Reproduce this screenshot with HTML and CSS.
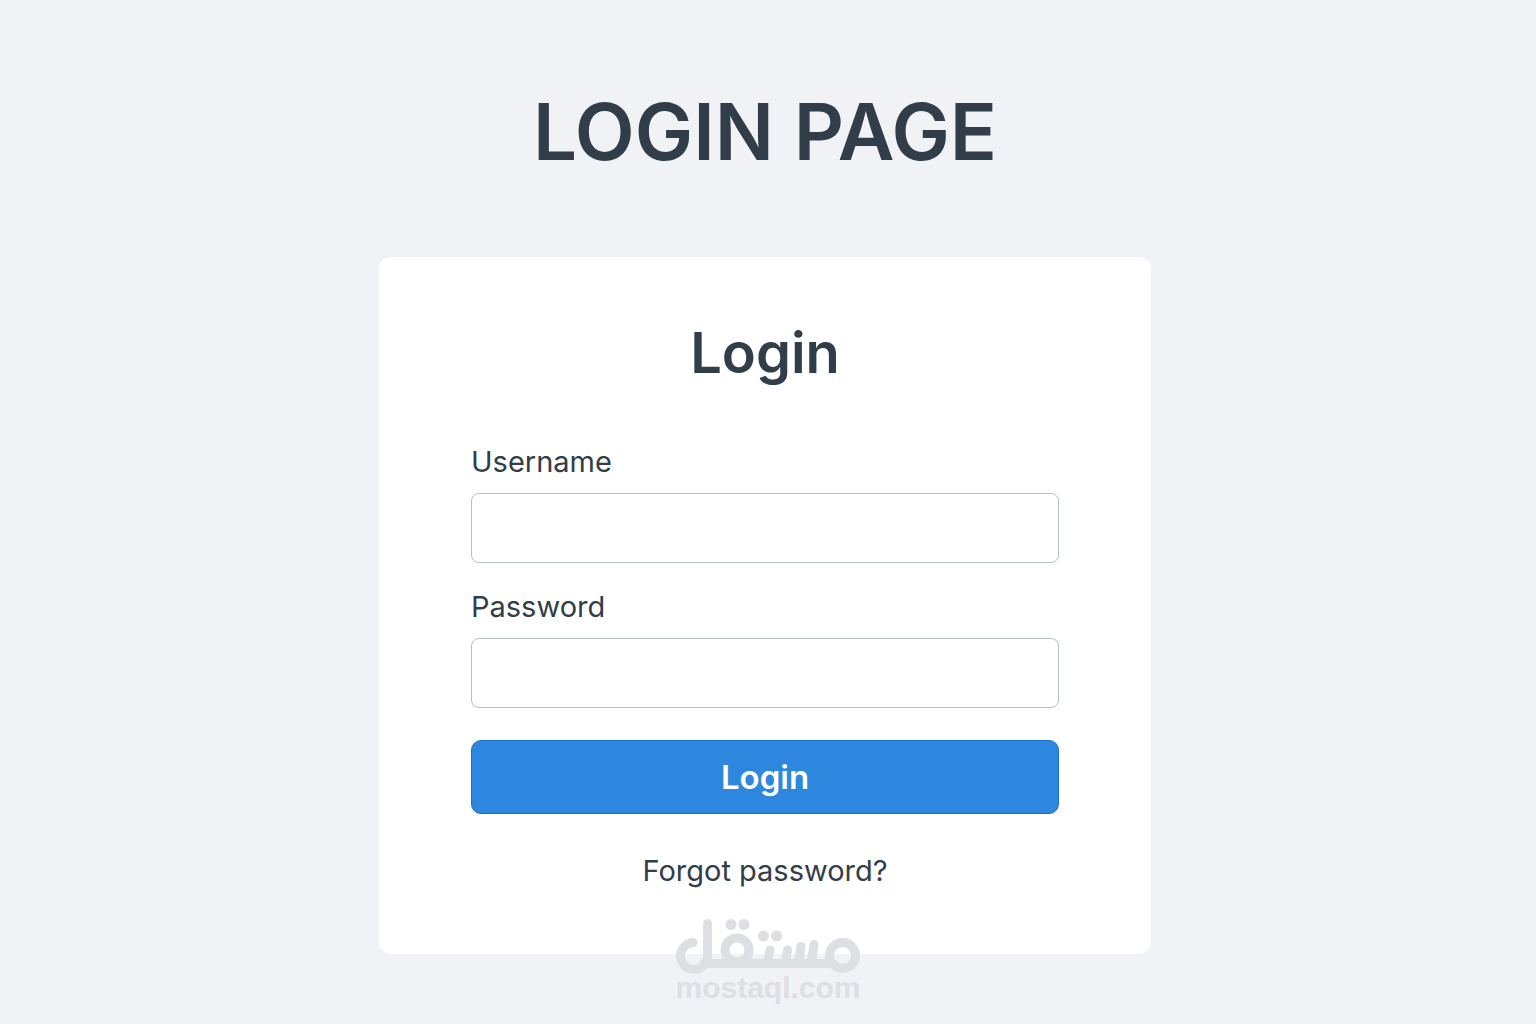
FILE: index.html
```
<!DOCTYPE html>
<html lang="en">
<head>
    <meta charset="UTF-8">
    <meta name="viewport" content="width=device-width, initial-scale=1.0">
    <title>Login Page</title>
    <link rel="stylesheet" href="styles.css">
</head>
<body>
    <h1 class="page-title">LOGIN PAGE</h1>
    <main class="card">
        <h2 class="card-title">Login</h2>
        <form class="login-form">
            <div class="field">
                <label for="username">Username</label>
                <input type="text" id="username" name="username">
            </div>
            <div class="field">
                <label for="password">Password</label>
                <input type="password" id="password" name="password">
            </div>
            <button type="submit">Login</button>
        </form>
        <a class="forgot" href="#">Forgot password?</a>
    </main>

    <div class="watermark">
        <svg viewBox="0 0 216 120" width="216" height="120" role="img" aria-label="mostaql.com">
            <g fill="none" stroke="#dedfe3" stroke-width="9" stroke-linecap="round">
                <path d="M33 42.500A13.500 13.500 0 1 0 47.500 55.500V23.500"/>
                <path d="M44 63.500H172"/>
                <circle cx="77" cy="50" r="12"/>
                <path d="M110 50L107.500 62M127.500 50L125.500 62M141 46.500L138.500 62M154 44.500L151.500 62"/>
                <circle cx="182.500" cy="55.500" r="13"/>
            </g>
            <g fill="#dedfe3">
                <circle cx="71" cy="24.500" r="5.500"/>
                <circle cx="84" cy="24.500" r="5.500"/>
                <circle cx="103.500" cy="36" r="5.500"/>
                <circle cx="116.500" cy="36" r="5.500"/>
            </g>
            <text class="watermark-text" x="108" y="98" text-anchor="middle">mostaql.com</text>
        </svg>
    </div>
</body>
</html>
```
FILE: styles.css
```
* {
    box-sizing: border-box;
}
body {
    position: relative;
    min-height: 100vh;
    margin: 0;
    padding: 84px 6px 70px 0;
    background-color: #f0f2f6;
    color: #323d4a;
    font-family: Inter, "Liberation Sans", sans-serif;
    font-size: 29px;
    line-height: 36px;
}
.page-title {
    margin: 0 0 77px;
    font-size: 78px;
    font-weight: 600;
    line-height: 96px;
    text-align: center;
}
.card {
    max-width: 772px;
    margin: 0 auto;
    padding: 64px 92px 65px;
    background-color: white;
    border-radius: 12px;
    text-align: center;
}
.card-title {
    margin: 0 0 59px;
    font-size: 56px;
    font-weight: 600;
    line-height: 64px;
}
.field {
    margin-bottom: 26px;
    text-align: left;
}
.field label {
    display: block;
    margin-bottom: 13px;
}
.field input {
    display: block;
    width: 100%;
    height: 70px;
    padding: 0 20px;
    border: 1px solid #b4c0cc;
    border-radius: 8px;
    background-color: white;
    color: inherit;
    font: inherit;
}
button {
    display: block;
    width: 100%;
    height: 74px;
    margin: 32px 0 39px;
    border: 1px solid #1470d6;
    border-radius: 10px;
    background-color: #2e87de;
    color: white;
    font-family: inherit;
    font-size: 33px;
    font-weight: 600;
    cursor: pointer;
}
.forgot {
    display: block;
    color: inherit;
    text-decoration: none;
}
/* logo sits over the bottom edge of the card */
.watermark {
    position: absolute;
    right: 0;
    bottom: 4px;
    left: 0;
    display: flex;
    justify-content: center;
    pointer-events: none;
}
.watermark-text {
    fill: #dedfe3;
    font-family: "Liberation Sans", Arial, sans-serif;
    font-size: 30px;
    font-weight: bold;
}
```
